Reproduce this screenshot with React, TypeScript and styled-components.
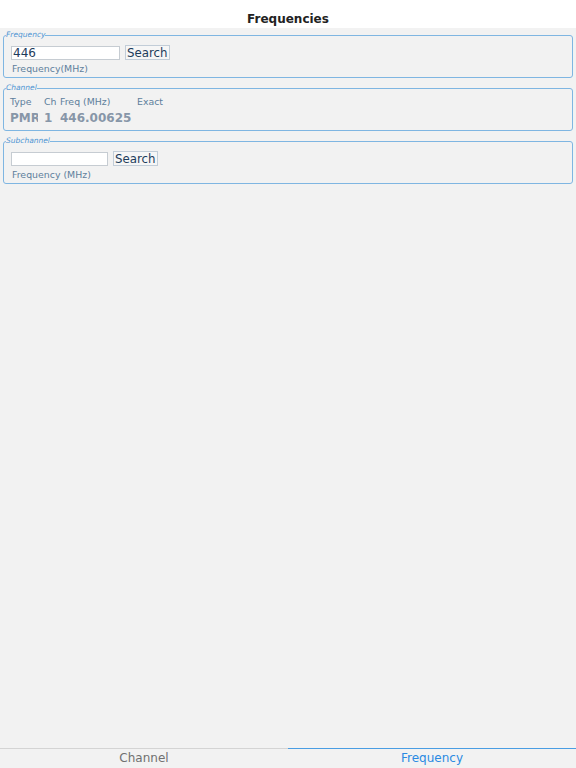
import React from 'react';
import styled, { createGlobalStyle } from 'styled-components';

const GlobalStyle = createGlobalStyle`
  html, body {
    margin: 0;
    padding: 0;
    background: #f2f2f2;
    font-family: 'DejaVu Sans', 'Liberation Sans', sans-serif;
  }
`;

const Page = styled.div`
  display: flex;
  flex-direction: column;
  height: 100vh;
  background: #f2f2f2;
`;

const TitleBar = styled.header`
  height: 28px;
  display: flex;
  align-items: center;
  justify-content: center;
  padding-top: 10px;
  box-sizing: border-box;
  background: #ffffff;
  font-size: 12px;
  font-weight: bold;
  color: #222222;
`;

const Content = styled.main`
  flex: 1;
  display: flex;
  flex-direction: column;
  gap: 5px;
  padding: 2px 3px 0;
`;

const Group = styled.fieldset`
  margin: 0;
  padding: 5px 7px 2px;
  border: 1px solid #7fb6e2;
  border-radius: 3px;
  min-width: 0;
`;

const Legend = styled.legend`
  padding: 0;
  margin-left: -5px;
  font-size: 7.5px;
  font-style: italic;
  line-height: 10px;
  color: #4f95d2;
`;

const SearchRow = styled.div`
  display: flex;
  align-items: center;
  gap: 5px;
`;

const TextInput = styled.input<{ $width: number }>`
  width: ${(p) => p.$width}px;
  height: 14px;
  box-sizing: border-box;
  margin: 0;
  padding: 0 1px;
  border: 1px solid #c6ccd2;
  background: #ffffff;
  font-family: inherit;
  font-size: 12px;
  color: #1d3c5b;
  outline: none;
`;

const SearchButton = styled.button`
  height: 15px;
  margin: 0;
  padding: 0 1px;
  border: 1px solid #c2cdd8;
  background: #f6f6f6;
  font-family: inherit;
  font-size: 11.8px;
  line-height: 12px;
  color: #1d3c5b;
`;

const Hint = styled.div`
  margin-top: 3px;
  margin-left: 1px;
  font-size: 9.4px;
  line-height: 12px;
  color: #5e7f9c;
`;

const Table = styled.div`
  display: grid;
  grid-template-columns: 34px 16px 77px auto;
  margin-left: -1px;
  margin-top: -2px;
  padding-bottom: 2px;
`;

const HeadCell = styled.div`
  font-size: 9.4px;
  line-height: 12px;
  color: #5e7f9c;
  white-space: nowrap;
`;

const ValueCell = styled.div<{ $clip?: number }>`
  margin-top: 2px;
  font-size: 12px;
  font-weight: bold;
  line-height: 16px;
  color: #8796a8;
  white-space: nowrap;
  overflow: hidden;
  max-width: ${(p) => (p.$clip ? `${p.$clip}px` : 'none')};
`;

const TabBar = styled.nav`
  display: grid;
  grid-template-columns: 1fr 1fr;
  height: 20px;
`;

const Tab = styled.div<{ $active?: boolean }>`
  display: flex;
  align-items: center;
  justify-content: center;
  border-top: 1px solid ${(p) => (p.$active ? '#4a9de3' : '#d4d4d4')};
  font-size: 12px;
  color: ${(p) => (p.$active ? '#2a8ae2' : '#707070')};
  padding-bottom: 2px;
`;

export default function App() {
  const [freq, setFreq] = React.useState('446');
  const [sub, setSub] = React.useState('');

  return (
    <Page>
      <GlobalStyle />
      <TitleBar>Frequencies</TitleBar>
      <Content>
        <Group>
          <Legend>Frequency</Legend>
          <SearchRow>
            <TextInput $width={109} value={freq} onChange={(e) => setFreq(e.target.value)} />
            <SearchButton>Search</SearchButton>
          </SearchRow>
          <Hint>Frequency(MHz)</Hint>
        </Group>

        <Group>
          <Legend>Channel</Legend>
          <Table>
            <HeadCell>Type</HeadCell>
            <HeadCell>Ch</HeadCell>
            <HeadCell>Freq (MHz)</HeadCell>
            <HeadCell>Exact</HeadCell>
            <ValueCell $clip={28}>PMR</ValueCell>
            <ValueCell>1</ValueCell>
            <ValueCell>446.00625</ValueCell>
            <ValueCell />
          </Table>
        </Group>

        <Group>
          <Legend>Subchannel</Legend>
          <SearchRow>
            <TextInput $width={97} value={sub} onChange={(e) => setSub(e.target.value)} />
            <SearchButton>Search</SearchButton>
          </SearchRow>
          <Hint>Frequency (MHz)</Hint>
        </Group>
      </Content>
      <TabBar>
        <Tab>Channel</Tab>
        <Tab $active>Frequency</Tab>
      </TabBar>
    </Page>
  );
}
